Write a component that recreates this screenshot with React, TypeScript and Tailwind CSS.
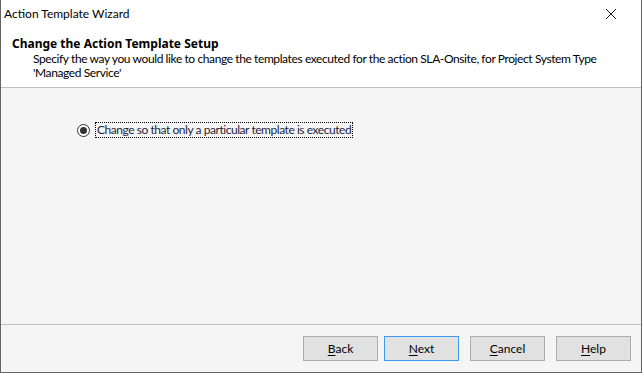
export default function App() {
  const font = { fontFamily: 'Lato, "Noto Sans", sans-serif' };
  const buttons = [
    { u: 'B', r: 'ack', active: false, ml: 'ml-0' },
    { u: 'N', r: 'ext', active: true, ml: 'ml-[6px]' },
    { u: 'C', r: 'ancel', active: false, ml: 'ml-[11px]' },
    { u: 'H', r: 'elp', active: false, ml: 'ml-[11px]' },
  ];
  return (
    <div
      className="w-[642px] h-[373px] flex flex-col bg-[#f5f5f5] border-x border-b border-[#646464] text-[12px] text-black overflow-hidden whitespace-nowrap"
      style={font}
    >
      {/* Title bar */}
      <div className="h-[30px] bg-white flex items-center justify-between shrink-0 pb-[2px]">
        <span className="pl-[3px] leading-none">Action Template Wizard</span>
        <svg width="12" height="12" viewBox="0 0 12 12" className="mr-[24px]">
          <path d="M1 1 L11 11 M11 1 L1 11" stroke="#1a1a1a" strokeWidth="1" />
        </svg>
      </div>

      {/* Header */}
      <div className="h-[58px] bg-white border-b border-[#bfbfbf] shrink-0 pl-[11px] pt-[6px]">
        <div className="font-bold leading-[16px] font-['Noto_Sans',sans-serif]">Change the Action Template Setup</div>
        <div className="pl-[21px] leading-[14px] text-[12px] tracking-[-0.4px]">
          Specify the way you would like to change the templates executed for the action SLA-Onsite, for Project System Type
          <br />
          'Managed Service'
        </div>
      </div>

      {/* Body */}
      <div className="flex-1 pt-[34px] pl-[76px]">
        <div className="flex items-center gap-[5px]">
          <span className="w-[13px] h-[13px] rounded-full border border-[#333] bg-white flex items-center justify-center">
            <span className="w-[7px] h-[7px] rounded-full bg-[#333]" />
          </span>
          <span className="border border-dotted border-black px-[1px] leading-[14px] text-[#1e1e3c] tracking-[-0.45px]">
            Change so that only a particular template is executed
          </span>
        </div>
      </div>

      {/* Footer */}
      <div className="h-[48px] border-t border-[#bfbfbf] shrink-0 flex items-start justify-end pr-[10px] pt-[11px]">
        {buttons.map((b) => (
          <div
            key={b.u}
            className={`${b.ml} w-[75px] h-[25px] flex items-center justify-center bg-[#e1e1e1] border ${
              b.active ? 'border-[#3c9bf0]' : 'border-[#adadad]'
            }`}
          >
            <span>
              <span className="underline underline-offset-2">{b.u}</span>
              {b.r}
            </span>
          </div>
        ))}
      </div>
    </div>
  );
}
